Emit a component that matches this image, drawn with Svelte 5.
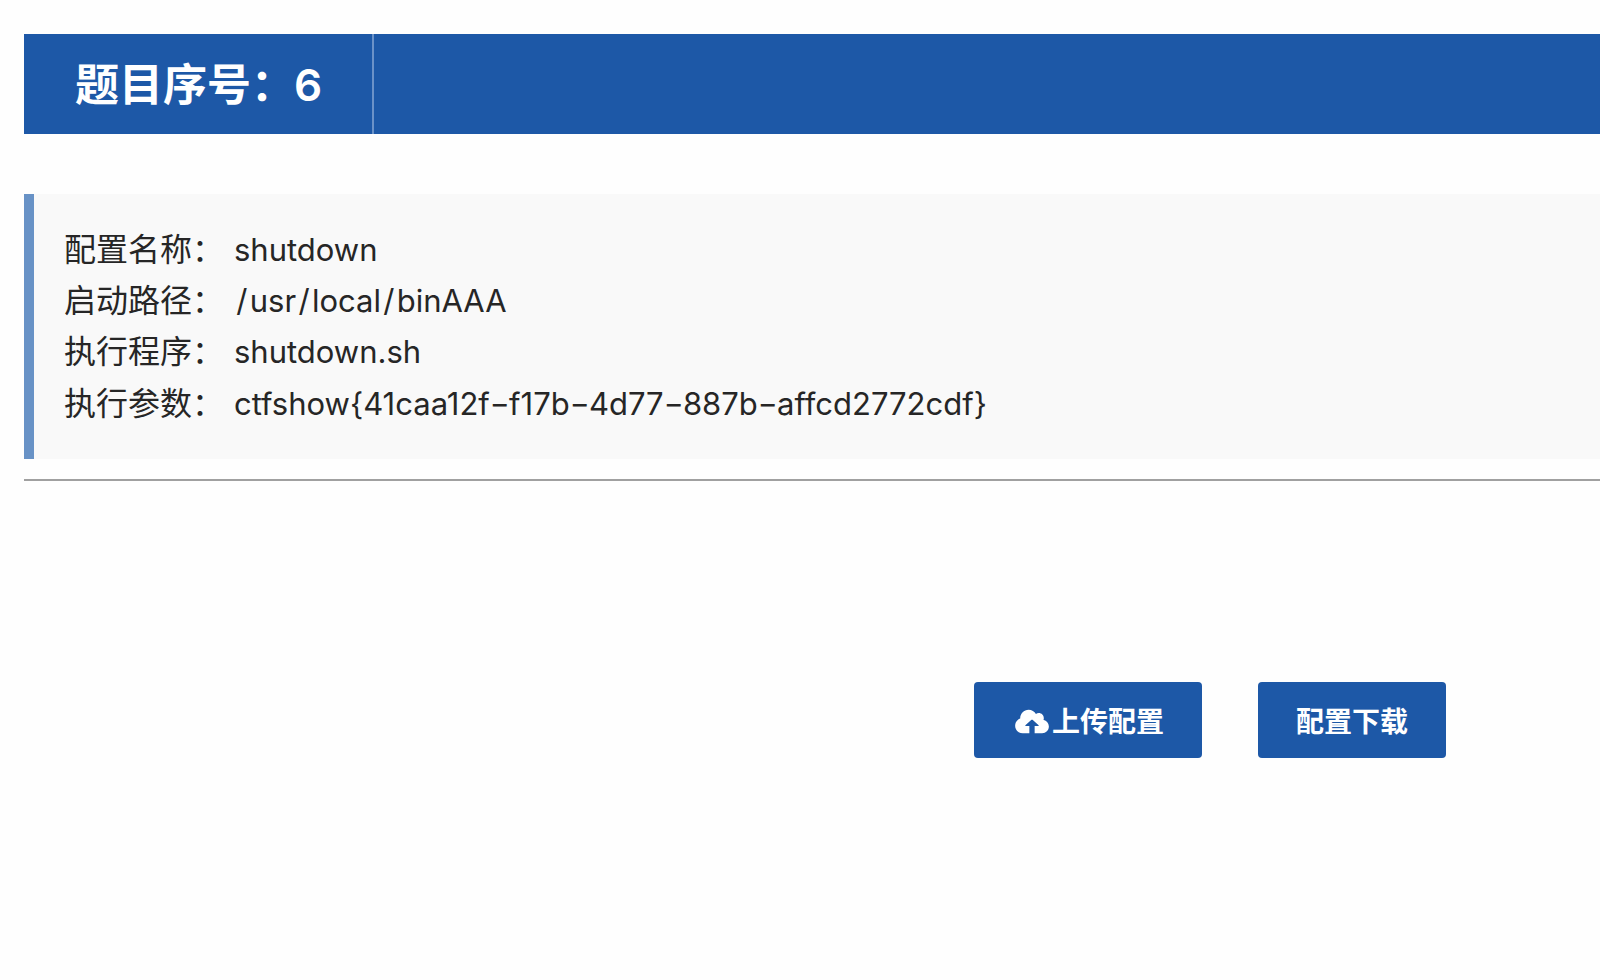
<script>
	const rows = [
		{ label: '配置名称', value: 'shutdown' },
		{ label: '启动路径', value: '/usr/local/binAAA' },
		{ label: '执行程序', value: 'shutdown.sh' },
		{ label: '执行参数', value: 'ctfshow{41caa12f-f17b-4d77-887b-affcd2772cdf}' }
	];

	// slashes and hyphens run wider in the reference's font
	const split = (text) => text.split(/([-/])/);
</script>

<div class="page">
	<header class="title">
		<h1>题目序号：<span class="num">6</span></h1>
	</header>

	<section class="info">
		{#each rows as row}
			<div class="row">
				<span class="label">{row.label}：</span>
				<span class="value">
					{#each split(row.value) as part}{#if part === '-'}<span class="dash">-</span>{:else if part === '/'}<span class="slash">/</span>{:else}{part}{/if}{/each}
				</span>
			</div>
		{/each}
	</section>

	<hr />

	<div class="actions">
		<button>
			<svg viewBox="0 0 640 512" aria-hidden="true">
				<path
					fill="currentColor"
					d="M537.6 226.6c4.1-10.7 6.4-22.4 6.4-34.6 0-53-43-96-96-96-19.7 0-38.1 6-53.3 16.2C367 64.2 315.3 32 256 32c-88.4 0-160 71.6-160 160 0 2.7.1 5.4.2 8.1C40.2 219.8 0 273.2 0 336c0 79.5 64.5 144 144 144h126V340h-70c-8 0-12-9-6-15l116-100c6-6 14-6 20 0l116 100c6 6 2 15-6 15h-70V480h142c70.7 0 128-57.3 128-128 0-61.9-44-113.6-102.4-125.4z"
				/>
			</svg>
			上传配置
		</button>
		<button>配置下载</button>
	</div>
</div>

<style>
	:global(body) {
		background: #fefefe;
		font-family: 'Liberation Sans', 'Noto Sans CJK SC', sans-serif;
		overflow: hidden;
	}

	.page {
		padding: 34px 0 0 24px;
	}

	.title {
		background: #1d58a7;
		height: 100px;
		margin-bottom: 60px;
	}

	h1 {
		box-sizing: border-box;
		width: 350px;
		height: 100px;
		margin: 0;
		padding-left: 51px;
		border-right: 2px solid #6b92c8;
		color: #fff;
		font-family: Inter, 'Noto Sans CJK SC', sans-serif;
		font-size: 44px;
		font-weight: 600;
		line-height: 102px;
	}

	.num {
		margin-left: -1px;
	}

	.info {
		height: 265px;
		box-sizing: border-box;
		padding: 31px 0 0 30px;
		background: #f9f9f9;
		border-left: 10px solid #6892c6;
		color: #262626;
		font-size: 32px;
		line-height: 51.2px;
	}

	.row {
		display: flex;
	}

	.label {
		width: 170px;
	}

	.value {
		margin-top: -1px;
		font-family: Inter, 'Noto Sans CJK SC', sans-serif;
		font-size: 31px;
	}

	.dash {
		display: inline-block;
		padding: 0 2.5px;
		transform: scaleX(1.4);
	}

	.slash {
		display: inline-block;
		padding: 0 2.3px;
	}

	hr {
		height: 2px;
		margin: 20px 0 0;
		border: 0;
		background: #a0a0a0;
	}

	.actions {
		display: flex;
		justify-content: flex-end;
		gap: 56px;
		margin-top: 201px;
		padding-right: 154px;
	}

	button {
		display: flex;
		align-items: center;
		justify-content: center;
		gap: 3px;
		height: 76px;
		padding: 0 38px;
		border: 0;
		border-radius: 4px;
		background: #1d58a7;
		color: #fff;
		font-family: inherit;
		font-size: 28px;
		font-weight: 700;
	}

	svg {
		width: 34px;
		height: 27px;
		margin: 3px 0 0 3px;
	}
</style>
